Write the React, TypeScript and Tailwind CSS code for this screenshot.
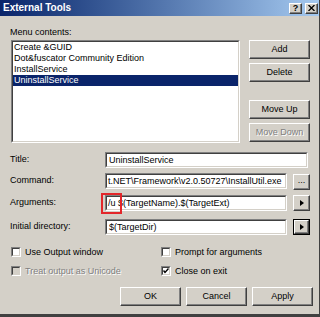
import React from 'react';

type BoxProps = { className?: string; children?: React.ReactNode };

// sunken 3D well used by list and edit boxes
function Sunken({ className = '', children, disabled }: BoxProps & { disabled?: boolean }) {
  return (
    <div className={`border border-t-[#808080] border-l-[#808080] border-r-white border-b-white ${className}`}>
      <div
        className={`h-full w-full overflow-hidden border border-t-[#404040] border-l-[#404040] border-r-[#d4d0c8] border-b-[#d4d0c8] ${
          disabled ? 'bg-[#d4d0c8]' : 'bg-white'
        }`}
      >
        {children}
      </div>
    </div>
  );
}

function Btn({ className = '', children, disabled }: BoxProps & { disabled?: boolean }) {
  return (
    <div
      className={`flex items-center justify-center bg-[#d4d0c8] border border-t-white border-l-white border-r-[#404040] border-b-[#404040] shadow-[inset_-1px_-1px_0_#808080] leading-none ${
        disabled ? 'text-[#808080] [text-shadow:1px_1px_0_#fff]' : 'text-black'
      } ${className}`}
    >
      {children}
    </div>
  );
}

function ArrowBtn({ focused }: { focused?: boolean }) {
  return (
    <div className={`w-[17px] h-[16px] ml-[6px] ${focused ? 'border border-black' : ''}`}>
      <Btn className="w-full h-full">
        <svg width="4" height="6" viewBox="0 0 4 6">
          <path d="M0 0 L4 3 L0 6 Z" fill="#000" />
        </svg>
      </Btn>
    </div>
  );
}

function Check({ label, checked, disabled }: { label: string; checked?: boolean; disabled?: boolean }) {
  return (
    <div className="flex items-center gap-[4px] h-[10px]">
      <Sunken className="w-[10px] h-[10px]" disabled={disabled}>
        {checked && (
          <svg width="6" height="6" viewBox="0 0 6 6" className="block">
            <path d="M0.5 2.5 L2 4.5 L5.5 0.5" stroke="#000" strokeWidth="1.4" fill="none" />
          </svg>
        )}
      </Sunken>
      <span className={`leading-[11px] ${disabled ? 'text-[#808080] [text-shadow:1px_1px_0_#fff]' : ''}`}>{label}</span>
    </div>
  );
}

const items = ['Create &GUID', 'Dot&fuscator Community Edition', 'InstallService', 'UninstallService'];

export default function App() {
  return (
    <div className="relative w-[320px] h-[317px] overflow-hidden bg-[#d4d0c8] border-r border-r-[#404040] border-b-[3px] border-b-[#404040] font-['Liberation_Sans',Arial,sans-serif] text-[9px] text-black">
      {/* title bar */}
      <div className="h-[16px] flex items-center bg-linear-to-r from-[#0a246a] to-[#a6caf0]">
        <span className="pl-[3px] text-white font-bold text-[10px] leading-none">External Tools</span>
        <div className="ml-auto flex gap-[3px] mr-[1px]">
          <Btn className="w-[13px] h-[11px]">
            <span className="font-bold text-[9px]">?</span>
          </Btn>
          <Btn className="w-[13px] h-[11px]">
            <svg width="7" height="6" viewBox="0 0 7 6">
              <path d="M0.5 0 L6.5 6 M6.5 0 L0.5 6" stroke="#000" strokeWidth="1.3" />
            </svg>
          </Btn>
        </div>
      </div>

      <div className="flex flex-col pl-[10px]">
        <div className="mt-[11px] leading-[11px]">Menu contents:</div>

        <div className="mt-[2px] flex">
          <Sunken className="ml-[1px] w-[229px] h-[103px]">
            {items.map((it, i) => (
              <div
                key={it}
                className={`h-[11px] leading-[11px] pl-[1px] whitespace-nowrap ${
                  i === 3 ? 'bg-[#0a246a] text-white' : ''
                }`}
              >
                {it}
              </div>
            ))}
          </Sunken>
          <div className="ml-[9px] w-[61px] flex flex-col">
            <Btn className="h-[19px]">Add</Btn>
            <Btn className="h-[19px] mt-[4px]">Delete</Btn>
            <Btn className="h-[19px] mt-[18px]">Move Up</Btn>
            <Btn className="h-[19px] mt-[4px]" disabled>
              Move Down
            </Btn>
          </div>
        </div>

        <div className="mt-[9px] flex items-center h-[16px]">
          <div className="w-[95px] leading-[11px] mb-[2px]">Title:</div>
          <Sunken className="w-[203px] h-[16px]">
            <div className="pl-[2px] leading-[12px] whitespace-nowrap">UninstallService</div>
          </Sunken>
        </div>

        <div className="mt-[5px] flex items-center h-[16px]">
          <div className="w-[95px] leading-[11px] mb-[2px]">Command:</div>
          <Sunken className="w-[182px] h-[16px]">
            <div className="pl-[1px] leading-[12px] whitespace-nowrap">t.NET\Framework\v2.0.50727\InstallUtil.exe</div>
          </Sunken>
          <div className="w-[17px] h-[16px] ml-[6px] mt-[2px]">
            <Btn className="w-full h-full">
              <span className="pb-[3px]">...</span>
            </Btn>
          </div>
        </div>

        <div className="mt-[6px] flex items-center h-[16px]">
          <div className="w-[95px] leading-[11px] mb-[2px]">Arguments:</div>
          <Sunken className="w-[182px] h-[16px]">
            <div className="pl-[1px] leading-[12px] whitespace-nowrap">/u $(TargetName).$(TargetExt)</div>
          </Sunken>
          <ArrowBtn />
        </div>

        <div className="mt-[8px] flex items-center h-[16px]">
          <div className="w-[95px] leading-[11px] mb-[2px]">Initial directory:</div>
          <Sunken className="w-[182px] h-[16px]">
            <div className="pl-[2px] leading-[12px] whitespace-nowrap">$(TargetDir)</div>
          </Sunken>
          <ArrowBtn focused />
        </div>

        <div className="mt-[12px] flex pl-[1px]">
          <div className="w-[150px]">
            <Check label="Use Output window" />
          </div>
          <Check label="Prompt for arguments" />
        </div>
        <div className="mt-[9px] flex pl-[1px]">
          <div className="w-[150px]">
            <Check label="Treat output as Unicode" disabled />
          </div>
          <Check label="Close on exit" checked />
        </div>

        <div className="mt-[11px] flex justify-end gap-[5px] pr-[6px]">
          <Btn className="w-[61px] h-[19px]">OK</Btn>
          <Btn className="w-[61px] h-[19px]">Cancel</Btn>
          <Btn className="w-[61px] h-[19px]">Apply</Btn>
        </div>
      </div>

      {/* red annotation box drawn over the arguments field */}
      <div className="absolute left-[101px] top-[193px] w-[21px] h-[21px] border-2 border-[#e3262a]" />
    </div>
  );
}
